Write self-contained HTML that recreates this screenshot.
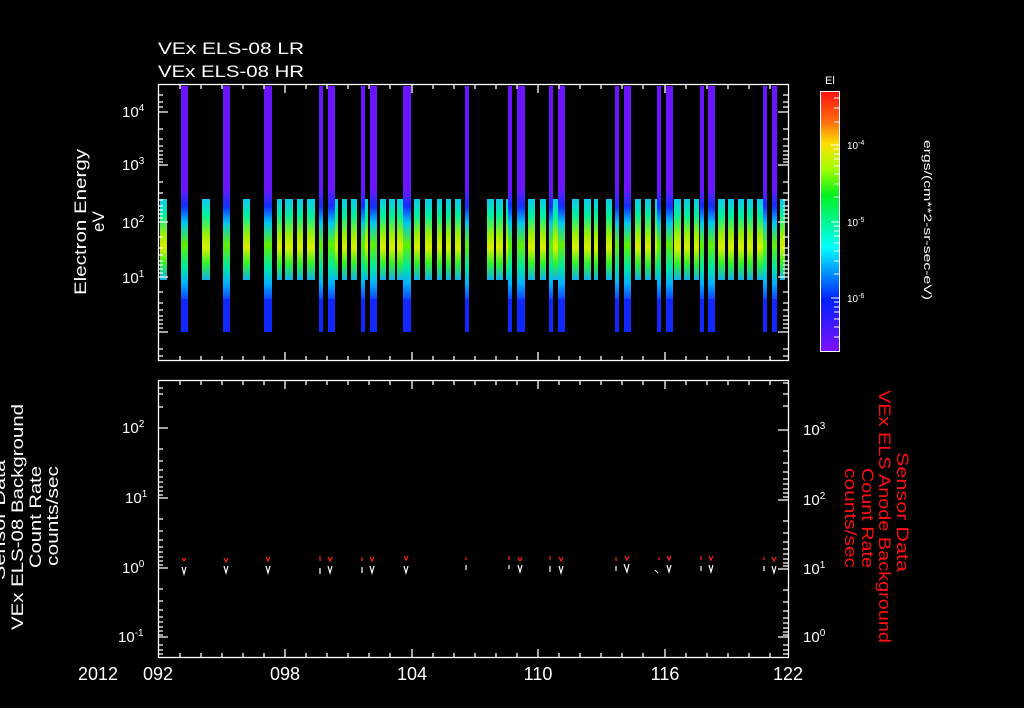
<!DOCTYPE html>
<html><head><meta charset="utf-8"><style>
html,body{margin:0;padding:0;background:#000;}
svg{display:block;font-family:"Liberation Sans",sans-serif;}
</style></head><body>
<svg width="1024" height="708" viewBox="0 0 1024 708" xmlns="http://www.w3.org/2000/svg">
<defs>
<linearGradient id="sh" x1="0" y1="0" x2="0" y2="1">
<stop offset="0" stop-color="#10c8f0"/><stop offset="0.2" stop-color="#00f0a0"/><stop offset="0.45" stop-color="#a0f000"/><stop offset="0.6" stop-color="#d8f000"/><stop offset="0.8" stop-color="#30f030"/><stop offset="1" stop-color="#10b0f0"/>
</linearGradient>
<linearGradient id="tm" x1="0" y1="0" x2="0" y2="1">
<stop offset="0" stop-color="#6818ff"/><stop offset="0.15" stop-color="#1030ff"/><stop offset="0.3" stop-color="#00c8f0"/><stop offset="0.5" stop-color="#60f000"/><stop offset="0.7" stop-color="#00e8a0"/><stop offset="0.85" stop-color="#00b0ff"/><stop offset="1" stop-color="#1040ff"/>
</linearGradient>
<linearGradient id="cb" x1="0" y1="0" x2="0" y2="1">
<stop offset="0" stop-color="#ff1010"/><stop offset="0.12" stop-color="#ff7010"/><stop offset="0.2" stop-color="#ffe000"/><stop offset="0.3" stop-color="#a0ff00"/><stop offset="0.4" stop-color="#00f020"/><stop offset="0.6" stop-color="#00ffff"/><stop offset="0.8" stop-color="#0020ff"/><stop offset="1" stop-color="#8010ff"/>
</linearGradient>
<g id="tb"><rect x="0" y="86" width="1" height="105" fill="#6a14ff"/><rect x="0" y="190" width="1" height="110" fill="url(#tm)"/><rect x="0" y="299" width="1" height="33" fill="#1028ff"/></g>
</defs>
<rect width="1024" height="708" fill="#000"/>
<g fill="#fff" font-size="17">
<text x="158" y="54" textLength="146" lengthAdjust="spacingAndGlyphs">VEx ELS-08 LR</text>
<text x="158" y="77" textLength="146" lengthAdjust="spacingAndGlyphs">VEx ELS-08 HR</text>
</g>
<g fill="url(#sh)">
<rect x="160" y="199" width="7" height="81"/><rect x="202" y="199" width="8" height="81"/><rect x="243" y="199" width="7" height="81"/>
<rect x="277" y="199" width="5" height="81"/><rect x="285" y="199" width="8" height="81"/><rect x="297" y="199" width="6" height="81"/><rect x="307" y="199" width="8" height="81"/>
<rect x="333" y="199" width="5" height="81"/><rect x="342" y="199" width="5" height="81"/><rect x="351" y="199" width="6" height="81"/><rect x="361" y="199" width="7" height="81"/>
<rect x="380" y="199" width="6" height="81"/><rect x="389" y="199" width="6" height="81"/><rect x="397" y="199" width="6" height="81"/><rect x="414" y="199" width="6" height="81"/>
<rect x="425" y="199" width="7" height="81"/><rect x="437" y="199" width="5" height="81"/><rect x="446" y="199" width="5" height="81"/><rect x="455" y="199" width="6" height="81"/>
<rect x="487" y="199" width="7" height="81"/><rect x="496" y="199" width="7" height="81"/><rect x="506" y="199" width="3" height="81"/><rect x="517" y="199" width="6" height="81"/>
<rect x="528" y="199" width="7" height="81"/><rect x="540" y="199" width="6" height="81"/><rect x="553" y="199" width="5" height="81"/><rect x="572" y="199" width="7" height="81"/>
<rect x="584" y="199" width="7" height="81"/><rect x="594" y="199" width="4" height="81"/><rect x="606" y="199" width="6" height="81"/><rect x="635" y="199" width="6" height="81"/>
<rect x="645" y="199" width="6" height="81"/><rect x="655" y="199" width="5" height="81"/><rect x="674" y="199" width="7" height="81"/><rect x="684" y="199" width="6" height="81"/>
<rect x="694" y="199" width="5" height="81"/><rect x="718" y="199" width="7" height="81"/><rect x="728" y="199" width="6" height="81"/><rect x="738" y="199" width="6" height="81"/>
<rect x="747" y="199" width="6" height="81"/><rect x="757" y="199" width="6" height="81"/><rect x="780" y="199" width="5" height="81"/>
</g>
<g>
<use href="#tb" transform="translate(181,0) scale(7,1)"/><use href="#tb" transform="translate(223,0) scale(7,1)"/><use href="#tb" transform="translate(264,0) scale(8,1)"/>
<use href="#tb" transform="translate(319,0) scale(4,1)"/><use href="#tb" transform="translate(328,0) scale(7,1)"/><use href="#tb" transform="translate(361,0) scale(4,1)"/><use href="#tb" transform="translate(370,0) scale(7,1)"/>
<use href="#tb" transform="translate(403,0) scale(8,1)"/><use href="#tb" transform="translate(465,0) scale(4,1)"/><use href="#tb" transform="translate(508,0) scale(4,1)"/><use href="#tb" transform="translate(517,0) scale(8,1)"/>
<use href="#tb" transform="translate(549,0) scale(4,1)"/><use href="#tb" transform="translate(558,0) scale(7,1)"/><use href="#tb" transform="translate(615,0) scale(4,1)"/><use href="#tb" transform="translate(624,0) scale(7,1)"/>
<use href="#tb" transform="translate(657,0) scale(4,1)"/><use href="#tb" transform="translate(666,0) scale(7,1)"/><use href="#tb" transform="translate(700,0) scale(4,1)"/><use href="#tb" transform="translate(708,0) scale(7,1)"/>
<use href="#tb" transform="translate(763,0) scale(4,1)"/><use href="#tb" transform="translate(772,0) scale(5,1)"/>
</g>
<g fill="none" stroke="#fff" stroke-width="1.3">
<rect x="158.5" y="84.5" width="630" height="276"/>
<rect x="158.5" y="380.5" width="630" height="277"/>
</g>
<g stroke="#fff" stroke-width="1.3">
<path d="M180 84v5M201 84v5M222 84v5M243 84v5M264 84v5M285 84v9M306 84v5M327 84v5M348 84v5M369 84v5M390 84v5M412 84v9M433 84v5M454 84v5M475 84v5M496 84v5M517 84v5M538 84v9M559 84v5M580 84v5M601 84v5M622 84v5M643 84v5M665 84v9M686 84v5M707 84v5M728 84v5M749 84v5M770 84v5"/>
<path d="M180 361v-5M201 361v-5M222 361v-5M243 361v-5M264 361v-5M285 361v-9M306 361v-5M327 361v-5M348 361v-5M369 361v-5M390 361v-5M412 361v-9M433 361v-5M454 361v-5M475 361v-5M496 361v-5M517 361v-5M538 361v-9M559 361v-5M580 361v-5M601 361v-5M622 361v-5M643 361v-5M665 361v-9M686 361v-5M707 361v-5M728 361v-5M749 361v-5M770 361v-5"/>
<path d="M180 380v5M201 380v5M222 380v5M243 380v5M264 380v5M285 380v9M306 380v5M327 380v5M348 380v5M369 380v5M390 380v5M412 380v9M433 380v5M454 380v5M475 380v5M496 380v5M517 380v5M538 380v9M559 380v5M580 380v5M601 380v5M622 380v5M643 380v5M665 380v9M686 380v5M707 380v5M728 380v5M749 380v5M770 380v5"/>
<path d="M180 658v-5M201 658v-5M222 658v-5M243 658v-5M264 658v-5M285 658v-9M306 658v-5M327 658v-5M348 658v-5M369 658v-5M390 658v-5M412 658v-9M433 658v-5M454 658v-5M475 658v-5M496 658v-5M517 658v-5M538 658v-9M559 658v-5M580 658v-5M601 658v-5M622 658v-5M643 658v-5M665 658v-9M686 658v-5M707 658v-5M728 658v-5M749 658v-5M770 658v-5"/>
<path d="M158 112h10M158 165h10M158 222h10M158 277h10M158 332h10M158 95h5M158 102h5M158 107h5M158 129h5M158 139h5M158 146h5M158 151h5M158 155h5M158 159h5M158 162h5M158 182h5M158 193h5M158 200h5M158 206h5M158 210h5M158 214h5M158 218h5M158 237h5M158 248h5M158 255h5M158 261h5M158 265h5M158 269h5M158 273h5M158 292h5M158 303h5M158 310h5M158 316h5M158 320h5M158 324h5M158 328h5M158 349h5M158 356h5"/>
<path d="M788 112h-10M788 165h-10M788 222h-10M788 277h-10M788 332h-10M788 95h-5M788 102h-5M788 107h-5M788 129h-5M788 139h-5M788 146h-5M788 151h-5M788 155h-5M788 159h-5M788 162h-5M788 182h-5M788 193h-5M788 200h-5M788 206h-5M788 210h-5M788 214h-5M788 218h-5M788 237h-5M788 248h-5M788 255h-5M788 261h-5M788 265h-5M788 269h-5M788 273h-5M788 292h-5M788 303h-5M788 310h-5M788 316h-5M788 320h-5M788 324h-5M788 328h-5M788 349h-5M788 356h-5"/>
<path d="M158 428h10M158 498h10M158 568h10M158 637h10M158 388h5M158 394h5M158 407h5M158 449h5M158 461h5M158 470h5M158 477h5M158 482h5M158 487h5M158 491h5M158 495h5M158 519h5M158 531h5M158 540h5M158 547h5M158 552h5M158 557h5M158 561h5M158 565h5M158 589h5M158 601h5M158 610h5M158 617h5M158 622h5M158 627h5M158 631h5M158 635h5M158 645h5M158 650h5M158 654h5"/>
<path d="M788 430h-10M788 500h-10M788 569h-10M788 637h-10M788 383h-5M788 394h-5M788 406h-5M788 451h-5M788 463h-5M788 472h-5M788 479h-5M788 484h-5M788 489h-5M788 493h-5M788 497h-5M788 521h-5M788 533h-5M788 542h-5M788 549h-5M788 554h-5M788 559h-5M788 563h-5M788 566h-5M788 590h-5M788 602h-5M788 611h-5M788 618h-5M788 623h-5M788 628h-5M788 632h-5M788 635h-5M788 645h-5M788 650h-5M788 654h-5"/>
</g>
<g fill="none" stroke-width="1.2">
<g stroke="#ff2020"><path d="M182 558l2 3 2-3M224 558l2 4 2-4M266 557l2 4 2-4M320 556v5M328 557l2 4 2-4M362 557v4M370 557l2 4 2-4M404 556l2 4 2-4M466 557v3M509 556v4M518 557l2 4 2-4M550 556v4M559 557l2 4 2-4M616 557v4M625 556l2 4 2-4M659 557v3M667 556l2 4 2-4M701 556v4M709 556l2 4 2-4M764 557v3M772 557l2 4 2-4"/></g>
<g stroke="#fff"><path d="M182 567l2 7 2-7M224 566l2 7 2-7M266 566l2 7 2-7M320 568v6M328 566l2 7 2-7M362 567v6M370 566l2 7 2-7M404 566l2 7 2-7M466 565v5M509 565v4M518 565l2 7 2-7M550 566v6M559 566l2 7 2-7M616 566v5M624 564l3 8 2-8M655 570l3 3M667 565l2 7 2-7M701 566v5M709 565l2 7 2-7M764 566v5M772 566l2 7 2-7"/></g>
</g>
<rect x="820.5" y="91.5" width="19" height="260" fill="url(#cb)" stroke="#fff" stroke-width="1"/>
<g stroke="#fff" stroke-width="1"><path d="M834 98h6M834 108h6M834 122h6M831 145h9M834 149h6M834 154h6M834 159h6M834 166h6M834 174h6M834 184h6M834 197h6M831 222h9M834 226h6M834 231h6M834 236h6M834 243h6M834 251h6M834 261h6M834 274h6M831 298h9M834 302h6M834 307h6M834 312h6M834 319h6M834 327h6M834 337h6"/></g>
<g fill="#fff" font-size="10">
<text x="825" y="84" font-size="11">El</text>
<text x="847" y="149">10<tspan dy="-4" font-size="7">-4</tspan></text>
<text x="847" y="226">10<tspan dy="-4" font-size="7">-5</tspan></text>
<text x="847" y="302">10<tspan dy="-4" font-size="7">-6</tspan></text>
<text transform="translate(924,140) rotate(90)" font-size="11" textLength="160" lengthAdjust="spacingAndGlyphs">ergs/(cm**2-sr-sec-eV)</text>
</g>
<g fill="#fff" font-size="15">
<text x="122" y="117">10<tspan dy="-6" font-size="10">4</tspan></text>
<text x="122" y="170">10<tspan dy="-6" font-size="10">3</tspan></text>
<text x="122" y="228">10<tspan dy="-6" font-size="10">2</tspan></text>
<text x="122" y="283">10<tspan dy="-6" font-size="10">1</tspan></text>
<text x="122" y="433">10<tspan dy="-6" font-size="10">2</tspan></text>
<text x="125" y="503">10<tspan dy="-6" font-size="10">1</tspan></text>
<text x="122" y="573">10<tspan dy="-6" font-size="10">0</tspan></text>
<text x="118" y="642">10<tspan dy="-6" font-size="10">-1</tspan></text>
<text x="803" y="435">10<tspan dy="-6" font-size="10">3</tspan></text>
<text x="803" y="505">10<tspan dy="-6" font-size="10">2</tspan></text>
<text x="803" y="574">10<tspan dy="-6" font-size="10">1</tspan></text>
<text x="803" y="642">10<tspan dy="-6" font-size="10">0</tspan></text>
</g>
<g fill="#fff" font-size="18" text-anchor="middle">
<text x="98" y="680">2012</text><text x="158" y="680">092</text><text x="285" y="680">098</text><text x="412" y="680">104</text><text x="538" y="680">110</text><text x="665" y="680">116</text><text x="788" y="680">122</text>
</g>
<g fill="#fff" font-size="17">
<text transform="translate(86,295) rotate(-90)" textLength="146" lengthAdjust="spacingAndGlyphs">Electron Energy</text>
<text transform="translate(104,232) rotate(-90)">eV</text>
<text transform="translate(5,580) rotate(-90)" textLength="120" lengthAdjust="spacingAndGlyphs">Sensor Data</text>
<text transform="translate(23,630) rotate(-90)" textLength="226" lengthAdjust="spacingAndGlyphs">VEx ELS-08 Background</text>
<text transform="translate(41,568) rotate(-90)" textLength="102" lengthAdjust="spacingAndGlyphs">Count Rate</text>
<text transform="translate(58,566) rotate(-90)" textLength="100" lengthAdjust="spacingAndGlyphs">counts/sec</text>
</g>
<g fill="#ff1010" font-size="17">
<text transform="translate(897,452) rotate(90)" textLength="120" lengthAdjust="spacingAndGlyphs">Sensor Data</text>
<text transform="translate(879,390) rotate(90)" textLength="253" lengthAdjust="spacingAndGlyphs">VEx ELS Anode Background</text>
<text transform="translate(862,468) rotate(90)" textLength="100" lengthAdjust="spacingAndGlyphs">Count Rate</text>
<text transform="translate(845,468) rotate(90)" textLength="100" lengthAdjust="spacingAndGlyphs">counts/sec</text>
</g>
</svg>
</body></html>
